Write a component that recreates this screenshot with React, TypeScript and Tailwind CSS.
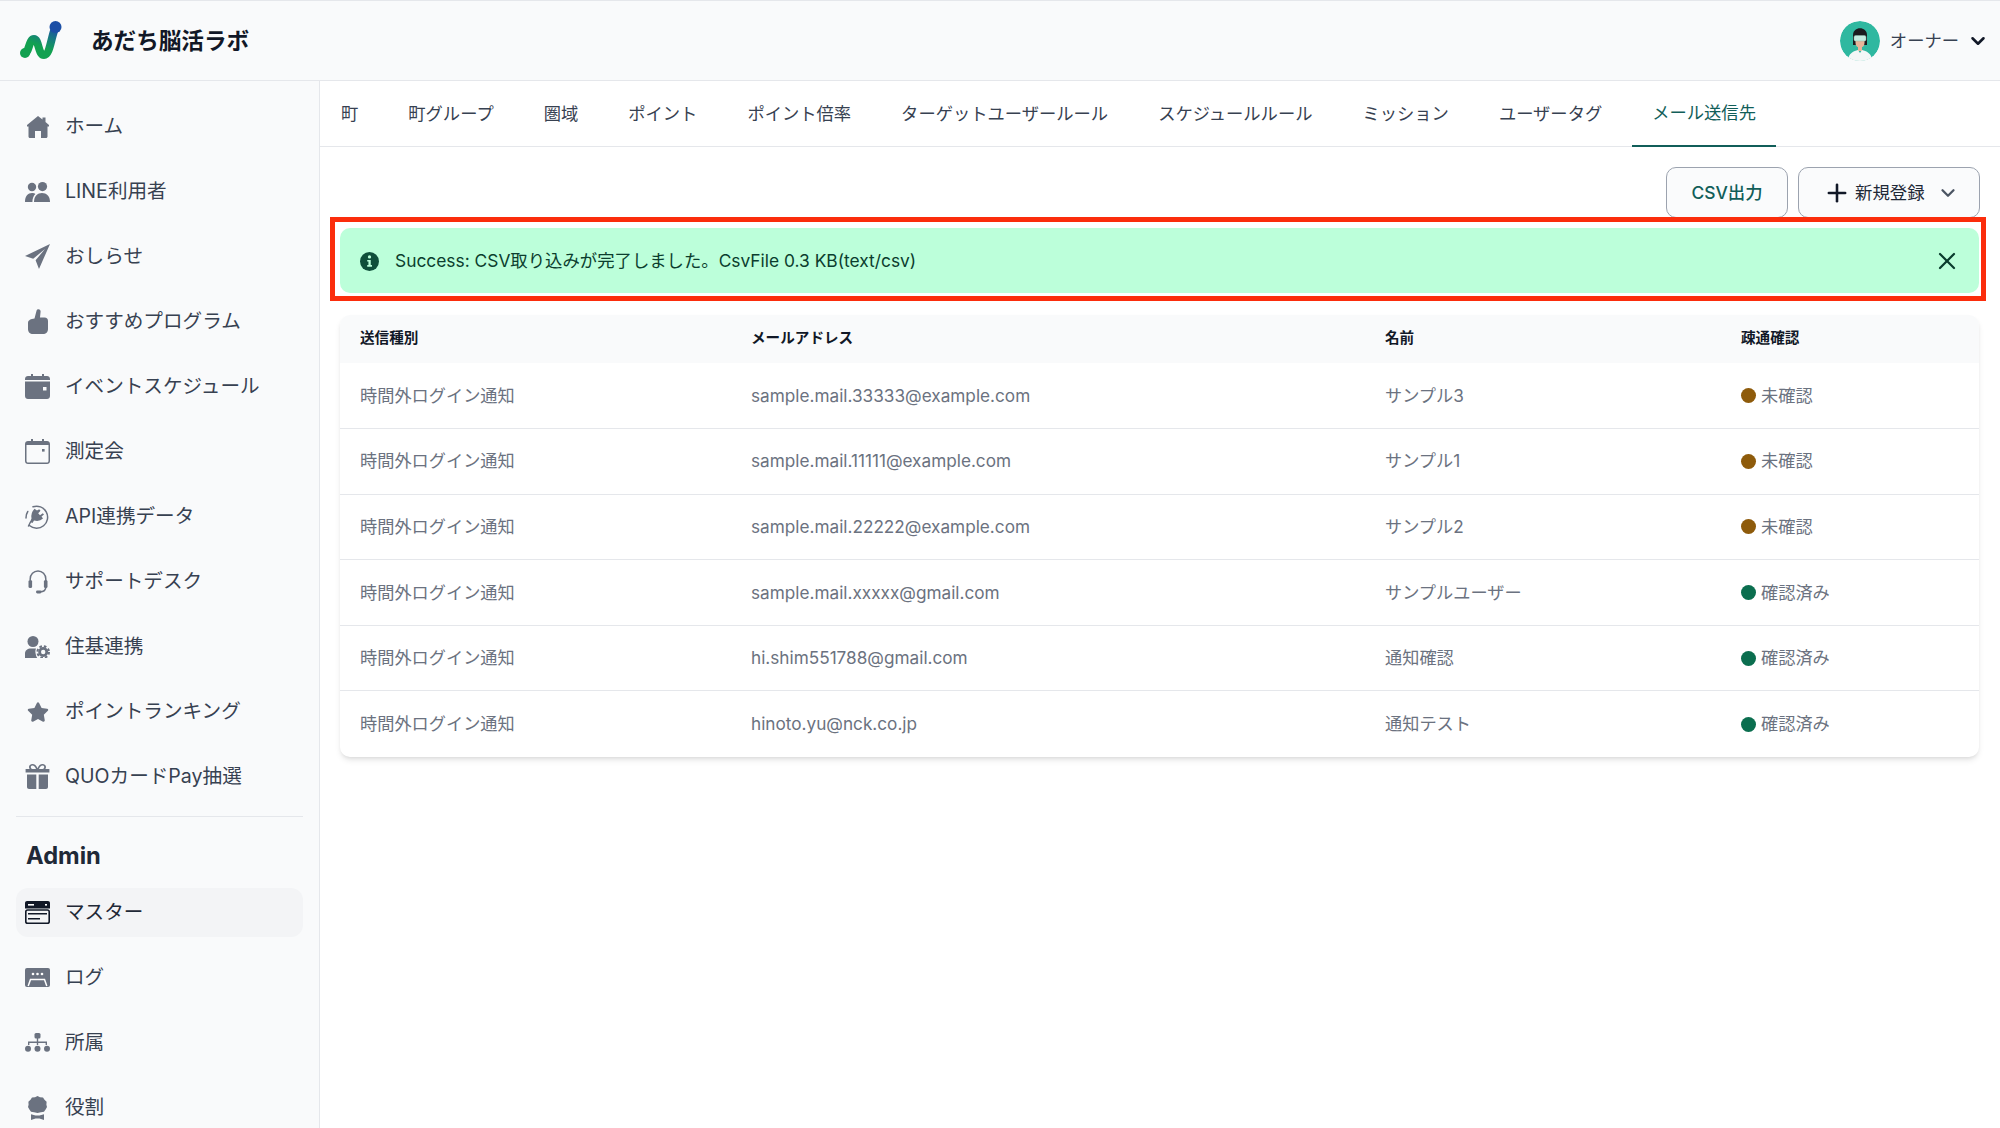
import type { ReactNode } from 'react';
import { FaStar } from 'react-icons/fa';
import { ChevronDown, Plus, X } from 'lucide-react';

function HomeIcon() {
  return (
    <svg viewBox="0 0 22 22" className="w-[22px] h-[22px]" fill="currentColor">
      <path d="M11 0 L15.5 3.6 V1.5 H18.5 V6 L22 9 V10.5 H20.5 V20.5 C20.5 21.4 19.9 22 19 22 H14 V15 H8 V22 H3 C2.1 22 1.5 21.4 1.5 20.5 V10.5 H0 V9 Z" />
    </svg>
  );
}

function UsersIcon() {
  return (
    <svg viewBox="0 0 25 20" className="w-[25px] h-5" fill="currentColor">
      <circle cx="7" cy="5" r="4.2" />
      <circle cx="17.5" cy="4.6" r="4.6" />
      <path d="M0 20 C0 14 3 11 7 11 C8.5 11 9.6 11.4 10.4 12 C8.4 14 7.4 16.6 7.4 20 Z" />
      <path d="M9 20 C9 14 12.6 11 17 11 C21.4 11 25 14 25 20 Z" />
    </svg>
  );
}

function PlaneIcon() {
  return (
    <svg viewBox="0 0 25 25" className="w-[25px] h-[25px]" fill="currentColor">
      <path d="M25 0 L0 12 L8.2 14.8 L20 5 L10.6 16.2 L14 25 Z" />
    </svg>
  );
}

function ThumbIcon() {
  return (
    <svg viewBox="0 0 20 25" className="w-5 h-[25px]" fill="currentColor">
      <path d="M6.5 9.5 L8.6 1.6 C9.2 -0.4 12.6 -0.2 12.6 2.6 L12 8.6 H16.5 C18.8 8.6 20 10 20 12 V20 C20 23 18 25 15 25 H5 C2 25 0 23 0 20 V14 C0 11 3 10 6.5 9.5 Z" />
    </svg>
  );
}

function CalendarSolidIcon() {
  return (
    <svg viewBox="0 0 25 25" className="w-[25px] h-[25px]" fill="currentColor">
      <path d="M6 0 H8 V2 H17 V0 H19 V2 H22 C23.7 2 25 3.3 25 5 V6 H0 V5 C0 3.3 1.3 2 3 2 H6 Z" />
      <path d="M0 7.5 H25 V22 C25 23.7 23.7 25 22 25 H3 C1.3 25 0 23.7 0 22 Z M18 13 V16.5 H21.5 V13 Z" fillRule="evenodd" />
    </svg>
  );
}

function CalendarOutlineIcon() {
  return (
    <svg viewBox="0 0 25 25" className="w-[25px] h-[25px]" fill="currentColor">
      <path d="M6 0 H8 V2 H17 V0 H19 V2 H22 C23.7 2 25 3.3 25 5 V22 C25 23.7 23.7 25 22 25 H3 C1.3 25 0 23.7 0 22 V5 C0 3.3 1.3 2 3 2 H6 Z M1.5 6 V22 C1.5 22.9 2.1 23.5 3 23.5 H22 C22.9 23.5 23.5 22.9 23.5 22 V6 Z" fillRule="evenodd" />
      <rect x="17" y="10" width="2.6" height="2.6" />
    </svg>
  );
}

function PlugIcon() {
  return (
    <svg viewBox="0 0 25 24" className="w-[25px] h-6">
      <path d="M8 1.8 A11 11 0 1 1 4.4 20.5" fill="none" stroke="currentColor" strokeWidth="1.5" strokeLinecap="round" />
      <path d="M1 13 A11 11 0 0 1 2.8 6.5" fill="none" stroke="currentColor" strokeWidth="1.5" strokeLinecap="round" />
      <path d="M12 5.5 L9.5 3.8 Q5.5 8 6.5 13.5 L5 17 L7.5 18 L9 15.5 Q14.5 17 18 13.5 L16.5 11.5 L19 9.5 L17.8 8.2 L15 10.2 L13.2 8.2 L15.5 5.8 L14.2 4.3 Z" fill="currentColor" />
      <path d="M5.5 17 L3.5 21" fill="none" stroke="currentColor" strokeWidth="1.5" strokeLinecap="round" />
    </svg>
  );
}

function HeadsetIcon() {
  return (
    <svg viewBox="0 0 20 24" className="w-5 h-6" fill="none" stroke="currentColor">
      <path d="M2.2 10 V9 C2.2 4.6 5.6 1 10 1 C14.4 1 17.8 4.6 17.8 9 V17 C17.8 20 16 21.8 12 21.8" strokeWidth="1.5" />
      <rect x="0.5" y="10" width="3.6" height="8" rx="1.5" fill="currentColor" stroke="none" />
      <rect x="15.9" y="10" width="3.6" height="8" rx="1.5" fill="currentColor" stroke="none" />
      <rect x="8" y="20.6" width="5.5" height="2.8" rx="1.4" fill="currentColor" stroke="none" />
    </svg>
  );
}

function UserGearIcon() {
  return (
    <svg viewBox="0 0 25 22" className="w-[25px] h-[22px]" fill="currentColor">
      <circle cx="8" cy="5.5" r="5.5" />
      <path d="M0 22 V17.5 C0 14.5 2.5 12.5 6 12.5 H11 C10.4 14 10.2 15.5 10.6 17.4 C10.8 19 11.4 20.6 12.2 22 Z" />
      <circle cx="18.2" cy="16" r="3.6" fill="none" stroke="currentColor" strokeWidth="2.8" />
      <circle cx="18.2" cy="16" r="5.8" fill="none" stroke="currentColor" strokeWidth="2" strokeDasharray="2.6 1.95" />
    </svg>
  );
}

function GiftIcon() {
  return (
    <svg viewBox="0 0 25 25" className="w-[25px] h-[25px]" fill="currentColor">
      <path d="M12.5 4.2 C11.5 1.5 9.5 0 7.5 0 C5.4 0 4 1.4 4 3 C4 3.8 4.2 4.4 4.6 5 H0.6 V8.6 H24.4 V5 H20.4 C20.8 4.4 21 3.8 21 3 C21 1.4 19.6 0 17.5 0 C15.5 0 13.5 1.5 12.5 4.2 Z M11 5 H7.5 C6.5 5 5.8 4.1 5.8 3 C5.8 2.2 6.5 1.6 7.5 1.6 C9 1.6 10.2 3 11 5 Z M14 5 C14.8 3 16 1.6 17.5 1.6 C18.5 1.6 19.2 2.2 19.2 3 C19.2 4.1 18.5 5 17.5 5 Z" fillRule="evenodd" />
      <path d="M2 10.5 H11.3 V25 H4 C2.9 25 2 24.1 2 23 Z" />
      <path d="M13.7 10.5 H23 V23 C23 24.1 22.1 25 21 25 H13.7 Z" />
    </svg>
  );
}

function MasterIcon() {
  return (
    <svg viewBox="0 0 25 23" className="w-[25px] h-[23px]">
      <path d="M2 0 H23 C24.1 0 25 0.9 25 2 V7.5 H0 V2 C0 0.9 0.9 0 2 0 Z" fill="currentColor" />
      <rect x="3" y="3" width="6" height="1.6" fill="#fff" />
      <rect x="20" y="3" width="2" height="1.6" fill="#fff" />
      <rect x="0.8" y="9" width="23.4" height="13.2" rx="1.8" fill="none" stroke="currentColor" strokeWidth="1.6" />
      <rect x="3" y="12" width="19" height="1.5" fill="currentColor" />
      <rect x="3" y="17" width="12" height="1.5" fill="currentColor" />
    </svg>
  );
}

function LogIcon() {
  return (
    <svg viewBox="0 0 25 19" className="w-[25px] h-[19px]">
      <rect width="25" height="19" rx="2" fill="currentColor" />
      <circle cx="8" cy="6" r="1.3" fill="#fff" />
      <circle cx="12.5" cy="6" r="1.3" fill="#fff" />
      <circle cx="17" cy="6" r="1.3" fill="#fff" />
      <path d="M3.2 18 L5.5 11.5 H19.5 L21.8 18" fill="none" stroke="#fff" strokeWidth="1.5" />
    </svg>
  );
}

function SitemapIcon() {
  return (
    <svg viewBox="0 0 25 19" className="w-[25px] h-[19px]" fill="currentColor">
      <rect x="9.5" y="0" width="6" height="5.5" rx="1.5" />
      <path d="M11.8 5 H13.2 V8.5 H22 V12 H20.6 V10 H13.2 V12 H11.8 V10 H4.4 V12 H3 V8.5 H11.8 Z" />
      <circle cx="3" cy="15.8" r="3" />
      <circle cx="12.5" cy="15.8" r="3" />
      <circle cx="22" cy="15.8" r="3" />
    </svg>
  );
}

function AwardIcon() {
  return (
    <svg viewBox="0 0 19 24" className="w-[19px] h-6" fill="currentColor">
      <path d="M9.5 0 L12 1.3 L15 1.4 L16.5 3.8 L18.6 5.8 L18.4 8.8 L19 11 L17.6 13.5 L16 15.8 L13 16.2 L9.5 17 L6 16.2 L3 15.8 L1.4 13.5 L0 11 L0.6 8.8 L0.4 5.8 L2.5 3.8 L4 1.4 L7 1.3 Z" />
      <path d="M3 18.2 L7.5 19.6 H11.5 L16 18.2 V24 L11.5 22.5 H7.5 L3 24 Z" />
    </svg>
  );
}

function Logo() {
  return (
    <svg viewBox="0 0 42 42" className="w-[42px] h-[42px]" fill="none">
      <defs>
        <linearGradient id="logoGrad" gradientUnits="userSpaceOnUse" x1="20" y1="40" x2="36" y2="2">
          <stop offset="0.3" stopColor="#12a150" />
          <stop offset="0.55" stopColor="#16807c" />
          <stop offset="0.85" stopColor="#1c4fa6" />
        </linearGradient>
      </defs>
      <path d="M5 33 C9 33 9 19 14 19 C19 19 18 35 24 35 C30 35 31 17 35.5 7" stroke="url(#logoGrad)" strokeWidth="8" strokeLinecap="round" strokeLinejoin="round" />
      <circle cx="5" cy="33" r="5" fill="#12a150" />
      <circle cx="35.5" cy="7" r="6" fill="#1c4fa6" />
    </svg>
  );
}

function Avatar() {
  return (
    <svg viewBox="0 0 40 40" className="w-10 h-10 rounded-full">
      <circle cx="20" cy="20" r="20" fill="#2fb8a0" />
      <path d="M13 14 C13 5 27 5 27 14 V24 H13 Z" fill="#1b1b1f" />
      <path d="M15.5 16 H24.5 V22 C24.5 25 22.5 26.5 20 26.5 C17.5 26.5 15.5 25 15.5 22 Z" fill="#e8b59a" />
      <rect x="18" y="25" width="4" height="5" fill="#e8b59a" />
      <path d="M8 40 C8 32 14 30 18 29 L20 32 L22 29 C26 30 32 32 32 40 Z" fill="#f3f7f7" />
      <rect x="14" y="14.5" width="12" height="5.5" rx="1.5" fill="#c5ebe0" stroke="#8db8ab" strokeWidth="0.5" />
    </svg>
  );
}

const NAV: { label: string; icon: ReactNode }[] = [
  { label: 'ホーム', icon: <HomeIcon /> },
  { label: 'LINE利用者', icon: <UsersIcon /> },
  { label: 'おしらせ', icon: <PlaneIcon /> },
  { label: 'おすすめプログラム', icon: <ThumbIcon /> },
  { label: 'イベントスケジュール', icon: <CalendarSolidIcon /> },
  { label: '測定会', icon: <CalendarOutlineIcon /> },
  { label: 'API連携データ', icon: <PlugIcon /> },
  { label: 'サポートデスク', icon: <HeadsetIcon /> },
  { label: '住基連携', icon: <UserGearIcon /> },
  { label: 'ポイントランキング', icon: <FaStar size={22} /> },
  { label: 'QUOカードPay抽選', icon: <GiftIcon /> },
];

const ADMIN_NAV: { label: string; icon: ReactNode; active?: boolean }[] = [
  { label: 'マスター', icon: <MasterIcon />, active: true },
  { label: 'ログ', icon: <LogIcon /> },
  { label: '所属', icon: <SitemapIcon /> },
  { label: '役割', icon: <AwardIcon /> },
];

const TABS = ['町', '町グループ', '圏域', 'ポイント', 'ポイント倍率', 'ターゲットユーザールール', 'スケジュールルール', 'ミッション', 'ユーザータグ', 'メール送信先'];

const ROWS = [
  { email: 'sample.mail.33333@example.com', name: 'サンプル3', ok: false },
  { email: 'sample.mail.11111@example.com', name: 'サンプル1', ok: false },
  { email: 'sample.mail.22222@example.com', name: 'サンプル2', ok: false },
  { email: 'sample.mail.xxxxx@gmail.com', name: 'サンプルユーザー', ok: true },
  { email: 'hi.shim551788@gmail.com', name: '通知確認', ok: true },
  { email: 'hinoto.yu@nck.co.jp', name: '通知テスト', ok: true },
];

function NavItem({ label, icon, active }: { label: string; icon: ReactNode; active?: boolean }) {
  return (
    <div className={`h-[49px] mb-4 flex items-center gap-[15px] px-[9px] rounded-xl text-[19.6px] ${active ? 'bg-[#f3f4f6] text-[#1f2937]' : 'text-[#374151]'}`}>
      <span className={`w-[25px] flex justify-center shrink-0 ${active ? 'text-[#111827]' : 'text-[#6b7280]'}`}>{icon}</span>
      <span>{label}</span>
    </div>
  );
}

export default function App() {
  return (
    <div className="h-screen flex flex-col overflow-hidden bg-white font-[Inter,'Noto_Sans_CJK_JP',sans-serif]">
      <header className="h-[81px] shrink-0 flex items-center justify-between bg-[#f9fafb] border-t border-b border-[#e5e7eb] pl-5 pr-[11px]">
        <div className="flex items-center gap-[29px]">
          <Logo />
          <span className="text-[22.6px] font-semibold text-[#111827]">あだち脳活ラボ</span>
        </div>
        <div className="flex items-center">
          <Avatar />
          <span className="ml-[10px] text-[17.3px] text-[#374151]">オーナー</span>
          <ChevronDown className="ml-[8px] w-[22px] h-[22px] text-[#111827]" strokeWidth={2.8} />
        </div>
      </header>

      <div className="flex-1 flex min-h-0">
        <aside className="w-[320px] shrink-0 bg-[#f9fafb] border-r border-[#e5e7eb] px-4 pt-[21px] overflow-hidden">
          {NAV.map((n) => (
            <NavItem key={n.label} {...n} />
          ))}
          <div className="-mt-px border-t border-[#e5e7eb]" />
          <div className="h-[71px] pl-[10px] pt-[23px] text-[23.7px] leading-[32px] font-bold text-[#1f2937]">Admin</div>
          {ADMIN_NAV.map((n) => (
            <NavItem key={n.label} {...n} />
          ))}
        </aside>

        <main className="flex-1 min-w-0">
          <nav className="h-[66px] flex items-stretch gap-[10px] border-b border-[#e5e7eb] pl-[1px] text-[17.3px]">
            {TABS.map((t, i) => {
              const isActive = i === TABS.length - 1;
              return (
                <div key={t} className={`px-5 flex items-center ${isActive ? 'text-[#115e59] border-b-2 border-[#115e59] -mb-px' : 'text-[#374151]'}`}>
                  {t}
                </div>
              );
            })}
          </nav>

          <div className="pt-5 pl-5 pr-[21px]">
            <div className="flex justify-end gap-[10px] -mr-px">
              <button className="h-[51px] w-[122px] pt-px rounded-[10px] border border-[#9ca3af] bg-[#fafbfc] text-[17.4px] font-medium text-[#115e59]">CSV出力</button>
              <button className="h-[51px] w-[182px] pl-[24px] pt-px rounded-[10px] border border-[#9ca3af] bg-[#fafbfc] text-[17.4px] text-[#1f2937] flex items-center">
                <Plus className="w-7 h-7 text-[#111827] mr-1" strokeWidth={2.2} />
                新規登録
                <ChevronDown className="ml-[12px] w-[22px] h-[22px] text-[#4b5563]" strokeWidth={2.5} />
              </button>
            </div>

            <div className="relative mt-[10px] h-[65px] rounded-[10px] bg-[#bcffda] flex items-center justify-between pl-5 pr-[18px] text-[#0b3d2e]">
              <div className="flex items-center gap-4 pt-px text-[17.36px] font-normal">
                <svg viewBox="0 0 20 20" className="w-[19px] h-[19px]">
                  <circle cx="10" cy="10" r="10" fill="#0f4f3a" />
                  <circle cx="10" cy="5.2" r="1.7" fill="#bcffda" />
                  <path d="M7.6 8.3 H11.3 V13.8 H12.6 V15.5 H7.6 V13.8 H8.9 V10 H7.6 Z" fill="#bcffda" />
                </svg>
                <span>Success: CSV取り込みが完了しました。CsvFile 0.3 KB(text/csv)</span>
              </div>
              <X className="w-7 h-7 text-[#0b3d2e]" strokeWidth={1.9} />
              <div className="absolute -top-[11px] -bottom-[8px] -left-[10px] -right-[7px] border-[5px] border-[#fb2d0c] pointer-events-none" />
            </div>

            <div className="mt-[22px] rounded-[10px] overflow-hidden shadow-md">
              <table className="w-full table-fixed border-collapse text-left">
                <thead className="bg-[#f9fafb]">
                  <tr className="h-[48px] text-[14.6px] font-semibold text-[#111827]">
                    <th className="w-[391px] pl-5 font-semibold">送信種別</th>
                    <th className="w-[634px] pl-5 font-semibold">メールアドレス</th>
                    <th className="w-[356px] pl-5 font-semibold">名前</th>
                    <th className="pl-5 font-semibold">疎通確認</th>
                  </tr>
                </thead>
                <tbody className="text-[17.2px] text-[#6b7280]">
                  {ROWS.map((r) => (
                    <tr key={r.email} className="h-[65.6px] border-b border-[#e5e7eb] last:border-b-0">
                      <td className="pl-5">時間外ログイン通知</td>
                      <td className="pl-5">{r.email}</td>
                      <td className="pl-5">{r.name}</td>
                      <td className="pl-5">
                        <span className="flex items-center gap-[5px]">
                          <span className={`w-[15px] h-[15px] rounded-full ${r.ok ? 'bg-[#0b6e4f]' : 'bg-[#8e5b0b]'}`} />
                          {r.ok ? '確認済み' : '未確認'}
                        </span>
                      </td>
                    </tr>
                  ))}
                </tbody>
              </table>
            </div>
          </div>
        </main>
      </div>
    </div>
  );
}
